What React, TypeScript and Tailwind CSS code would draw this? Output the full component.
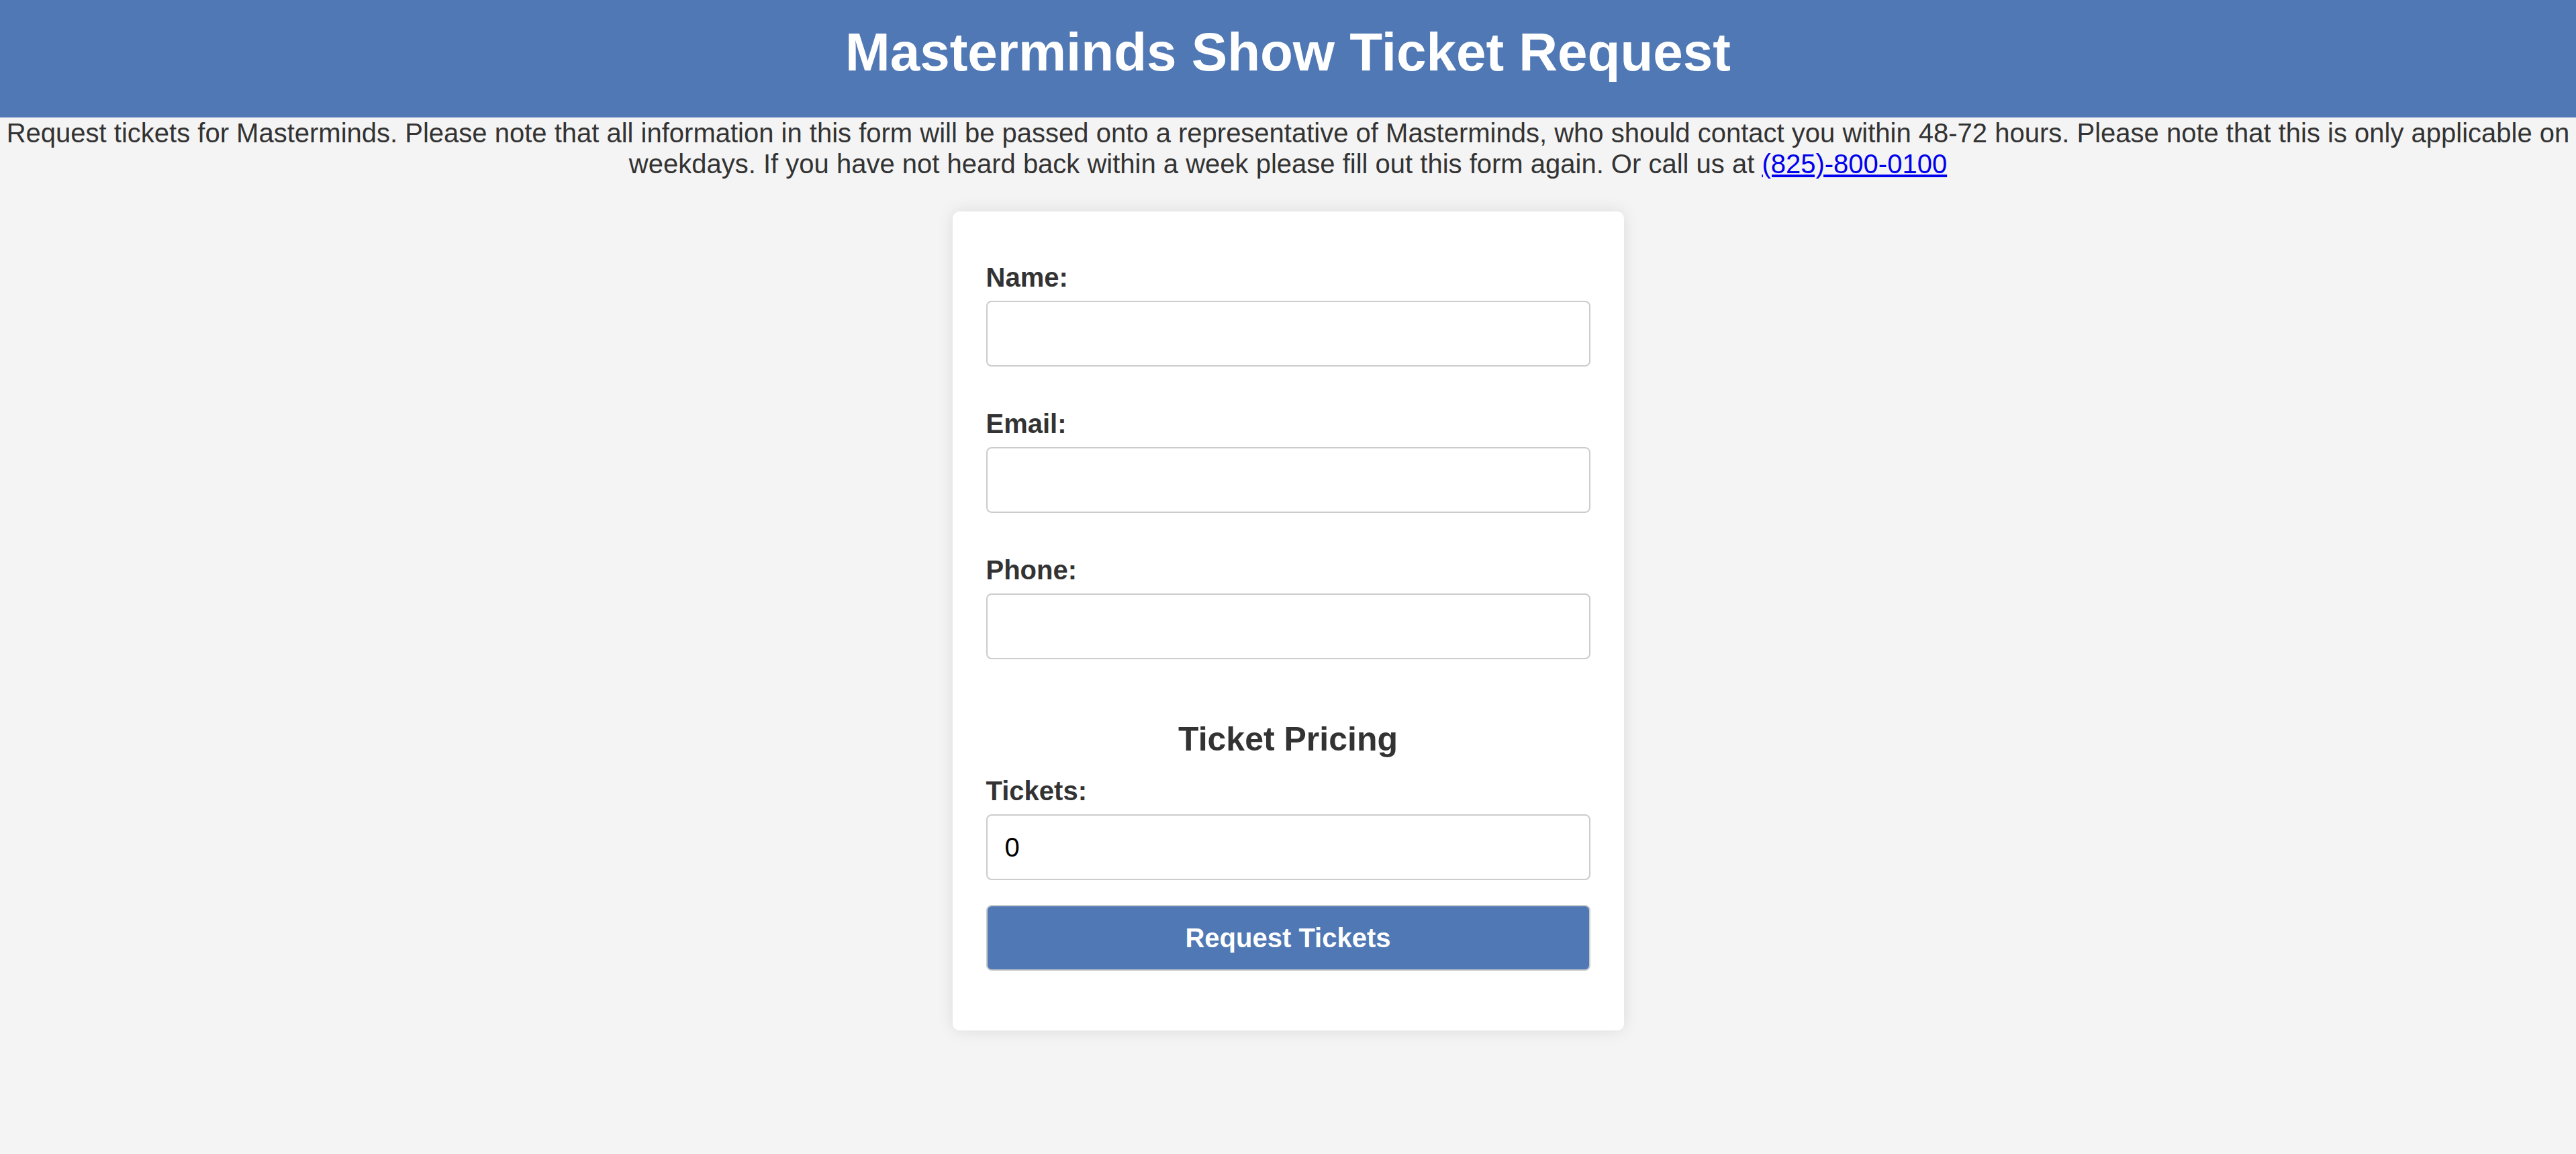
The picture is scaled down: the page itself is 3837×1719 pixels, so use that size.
import React from "react";

function Field({ label, value }: { label: string; value?: string }) {
  return (
    <div className="pt-[25px] pb-[37px]">
      <label className="block mb-[12px] text-[40px] leading-[46px] font-bold text-[#333]">{label}</label>
      <input
        type="text"
        defaultValue={value}
        className="block w-full h-[98px] box-border border-2 border-[#ccc] rounded-[8px] bg-white px-[26px] text-[40px] text-black outline-none"
        style={{ fontFamily: "'Liberation Sans', Arial, sans-serif" }}
      />
    </div>
  );
}

export default function App() {
  return (
    <div
      className="min-h-[1719px] w-full bg-[#f4f4f4] text-[#333]"
      style={{ fontFamily: "'Liberation Sans', Arial, sans-serif" }}
    >
      <header className="bg-[#4f78b5] h-[175px] pt-[32px] box-border">
        <h1 className="m-0 text-center text-white font-bold text-[80px] leading-[92px]">
          Masterminds Show Ticket Request
        </h1>
      </header>
      <p className="m-0 text-center text-[40px] leading-[46px] text-[#333]">
        Request tickets for Masterminds. Please note that all information in this form will be passed onto a
        representative of Masterminds, who should contact you within 48-72 hours. Please note that this is only
        applicable on weekdays. If you have not heard back within a week please fill out this form again. Or call us at{" "}
        <a href="#" className="text-[#0000ee] underline">
          (825)-800-0100
        </a>
      </p>
      <div className="flex justify-center pt-[48px]">
        <form
          className="w-[1000px] box-border bg-white rounded-[10px] px-[50px] pt-[50px] pb-[89px] shadow-[0_0_25px_rgba(0,0,0,0.1)]"
          onSubmit={(e) => e.preventDefault()}
        >
          <Field label="Name:" />
          <Field label="Email:" />
          <Field label="Phone:" />
          <h3 className="pt-[54px] m-0 text-center text-[50px] leading-[57px] font-bold text-[#333]">
            Ticket Pricing
          </h3>
          <Field label="Tickets:" value="0" />
          <button
            type="submit"
            className="block w-full h-[98px] box-border border-2 border-[#ccc] rounded-[8px] bg-[#4f78b5] text-white font-bold text-[40px]"
          >
            Request Tickets
          </button>
        </form>
      </div>
    </div>
  );
}
